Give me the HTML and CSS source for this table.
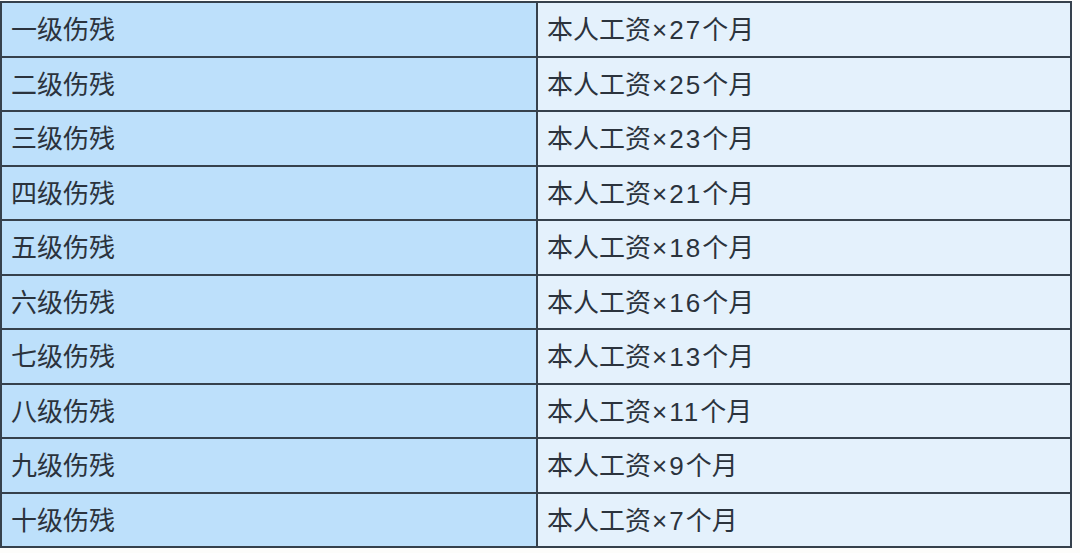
FILE: index.html
```html
<!DOCTYPE html>
<html lang="zh">
<head>
<meta charset="utf-8">
<link rel="stylesheet" href="styles.css">
</head>
<body>
<div class="wrap">
<table class="grade">
<colgroup><col class="c1"><col class="c2"></colgroup>
<tbody>
<tr><td class="lvl">一级伤残</td><td class="pay">本人工资<span class="mul">×27</span>个月</td></tr>
<tr><td class="lvl">二级伤残</td><td class="pay">本人工资<span class="mul">×25</span>个月</td></tr>
<tr><td class="lvl">三级伤残</td><td class="pay">本人工资<span class="mul">×23</span>个月</td></tr>
<tr><td class="lvl">四级伤残</td><td class="pay">本人工资<span class="mul">×21</span>个月</td></tr>
<tr><td class="lvl">五级伤残</td><td class="pay">本人工资<span class="mul">×18</span>个月</td></tr>
<tr><td class="lvl">六级伤残</td><td class="pay">本人工资<span class="mul">×16</span>个月</td></tr>
<tr><td class="lvl">七级伤残</td><td class="pay">本人工资<span class="mul">×13</span>个月</td></tr>
<tr><td class="lvl">八级伤残</td><td class="pay">本人工资<span class="mul">×11</span>个月</td></tr>
<tr><td class="lvl">九级伤残</td><td class="pay">本人工资<span class="mul">×9</span>个月</td></tr>
<tr><td class="lvl">十级伤残</td><td class="pay">本人工资<span class="mul">×7</span>个月</td></tr>
</tbody>
</table>
</div>
</body>
</html>
```

FILE: styles.css
```css
html, body {
  margin: 0;
  padding: 0;
  background: #fdfdfb;
}
.wrap {
  padding: 1px 0 0 0;
}
.grade {
  border-collapse: collapse;
  width: 1072px;
  height: 547px;
  table-layout: fixed;
  font-family: "Liberation Sans", "Noto Sans CJK SC", sans-serif;
  font-size: 26px;
  color: #2b333d;
}
.grade .c1 {
  width: 536px;
}
.grade td {
  border: 2px solid #36414c;
  padding: 2px 0 0 9px;
  vertical-align: middle;
  white-space: nowrap;
  line-height: 1;
}
.grade .lvl {
  background: #bde0fb;
}
.grade .pay {
  background: #e4f1fc;
}
.grade .mul {
  margin-left: 1px;
  letter-spacing: 2px;
}
```
